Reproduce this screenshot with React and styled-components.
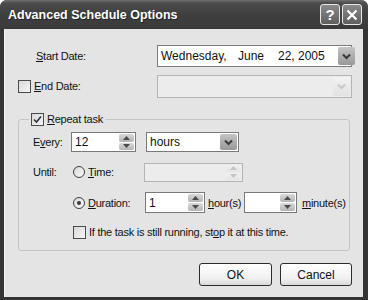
import React from 'react';
import styled, { createGlobalStyle } from 'styled-components';

const GlobalStyle = createGlobalStyle`
  html, body {
    margin: 0;
    padding: 0;
    background: #ffffff;
  }
  body {
    font-family: "Liberation Sans", Arial, sans-serif;
    font-size: 11px;
    letter-spacing: -0.25px;
    color: #111;
  }
`;

const Window = styled.div`
  width: 368px;
  height: 300px;
  display: flex;
  flex-direction: column;
  background: #343434;
  border-radius: 7px 7px 0 0;
  overflow: hidden;
`;

const TitleBar = styled.div`
  height: 29px;
  flex: none;
  display: flex;
  align-items: center;
  padding: 0 6px 0 8px;
  background: linear-gradient(to bottom, #707070 0, #4c4c4c 3px, #404040 45%, #3a3a3a 100%);
`;

const Title = styled.div`
  flex: 1;
  color: #fff;
  font-size: 12.5px;
  font-weight: bold;
  letter-spacing: 0;
  text-shadow: 1px 1px 0 #222;
  padding-top: 1px;
`;

const CaptionButton = styled.div`
  width: 20px;
  height: 21px;
  margin-left: 2px;
  box-sizing: border-box;
  border: 1px solid #e8e8e8;
  border-radius: 3px;
  background: linear-gradient(to bottom, #8a8a8a, #5e5e5e);
  display: flex;
  align-items: center;
  justify-content: center;
  color: #fff;
  font-size: 15px;
  font-weight: bold;
`;

const Body = styled.div`
  flex: 1;
  margin: 0 5px 3px 4px;
  background: #e4e4e4;
  display: flex;
  flex-direction: column;
  padding: 16px 12px 0 13px;
  border-left: 1px solid #f4f4f4;
`;

const FieldRow = styled.div`
  display: flex;
  align-items: center;
  height: 22px;
  margin-top: ${(p) => p.$top || 0}px;
`;

const LabelCell = styled.div`
  width: ${(p) => p.$w}px;
  flex: none;
  display: flex;
  align-items: center;
  gap: 3px;
  padding-left: ${(p) => p.$pad || 0}px;
  box-sizing: border-box;
  white-space: nowrap;
`;

const Key = styled.span`
  text-decoration: underline;
`;

const Check = styled.div`
  width: 13px;
  height: 13px;
  flex: none;
  box-sizing: border-box;
  border: 1px solid #4a4a4a;
  background: linear-gradient(135deg, #d8d8d8, #f6f6f6);
  display: flex;
  align-items: center;
  justify-content: center;
`;

const Radio = styled.div`
  width: 12px;
  height: 12px;
  flex: none;
  box-sizing: border-box;
  border: 1px solid #3f3f3f;
  border-radius: 50%;
  background: linear-gradient(135deg, #d8d8d8, #fafafa);
  display: flex;
  align-items: center;
  justify-content: center;
  &::after {
    content: '';
    width: 4px;
    height: 4px;
    border-radius: 50%;
    background: ${(p) => (p.$on ? '#3a3a3a' : 'transparent')};
  }
`;

const Box = styled.div`
  width: ${(p) => p.$w}px;
  height: ${(p) => p.$h || 20}px;
  flex: none;
  box-sizing: border-box;
  border: 1px solid ${(p) => (p.$disabled ? '#b4b4b4' : '#7a7a7a')};
  background: ${(p) => (p.$disabled ? '#ececec' : '#fff')};
  display: flex;
  align-items: stretch;
  padding: 1px;
`;

const BoxText = styled.div`
  flex: 1;
  display: flex;
  align-items: center;
  padding-left: 2px;
  font-size: 12px;
  letter-spacing: 0;
  white-space: pre;
`;

const DateField = styled.span`
  width: ${(p) => p.$w}px;
  flex: none;
`;

const DropButton = styled.div`
  width: 17px;
  flex: none;
  border-radius: 2px;
  background: ${(p) =>
    p.$disabled
      ? 'linear-gradient(to bottom, #f2f2f2, #e2e2e2)'
      : 'linear-gradient(to bottom, #c4c4c4, #989898)'};
  display: flex;
  align-items: center;
  justify-content: center;
`;

const SpinCol = styled.div`
  width: 15px;
  flex: none;
  display: flex;
  flex-direction: column;
  gap: 1px;
`;

const SpinHalf = styled.div`
  flex: 1;
  border-radius: 2px;
  background: ${(p) =>
    p.$disabled
      ? 'linear-gradient(to bottom, #f0f0f0, #e4e4e4)'
      : 'linear-gradient(to bottom, #d8d8d8, #b4b4b4)'};
  display: flex;
  align-items: center;
  justify-content: center;
`;

const Group = styled.div`
  position: relative;
  margin-top: 22px;
  margin-right: 1px;
  height: 132px;
  box-sizing: border-box;
  border: 1px solid #c4c4c4;
  border-radius: 3px;
  padding: 12px 0 0 14px;
  display: flex;
  flex-direction: column;
`;

const Legend = styled.div`
  position: absolute;
  top: -8px;
  left: 10px;
  padding: 0 3px 0 2px;
  background: #e4e4e4;
  display: flex;
  align-items: center;
  gap: 3px;
  height: 14px;
`;

const GroupRow = styled.div`
  display: flex;
  align-items: center;
  height: ${(p) => p.$h || 20}px;
  margin-top: ${(p) => p.$top || 0}px;
  white-space: nowrap;
`;

const Gap = styled.div`
  width: ${(p) => p.$w}px;
  flex: none;
`;

const Buttons = styled.div`
  display: flex;
  justify-content: flex-end;
  gap: 8px;
  margin-top: 12px;
  margin-right: -1px;
`;

const PushButton = styled.div`
  width: ${(p) => p.$w}px;
  height: 23px;
  box-sizing: border-box;
  border: 1px solid #2c2c2c;
  border-radius: 3px;
  background: linear-gradient(to bottom, #ffffff, #f0f0f0 70%, #d8d8d8);
  display: flex;
  align-items: center;
  justify-content: center;
  font-size: 12px;
  letter-spacing: 0;
`;

const Chevron = ({ color }) => (
  <svg width="9" height="7" viewBox="0 0 9 7">
    <path d="M1 1.5 L4.5 5 L8 1.5" fill="none" stroke={color} strokeWidth="2" />
  </svg>
);

const Arrow = ({ up, color }) => (
  <svg width="7" height="4" viewBox="0 0 7 4">
    <path d={up ? 'M0 4 L3.5 0 L7 4 Z' : 'M0 0 L3.5 4 L7 0 Z'} fill={color} />
  </svg>
);

const Combo = ({ w, h, disabled, children }) => (
  <Box $w={w} $h={h} $disabled={disabled}>
    <BoxText>{children}</BoxText>
    <DropButton $disabled={disabled}>
      <Chevron color={disabled ? '#c8c8c8' : '#3a3a3a'} />
    </DropButton>
  </Box>
);

const Spinner = ({ w, h, disabled, children }) => (
  <Box $w={w} $h={h} $disabled={disabled}>
    <BoxText>{children}</BoxText>
    <SpinCol>
      <SpinHalf $disabled={disabled}>
        <Arrow up color={disabled ? '#c4c4c4' : '#4a4a4a'} />
      </SpinHalf>
      <SpinHalf $disabled={disabled}>
        <Arrow color={disabled ? '#c4c4c4' : '#4a4a4a'} />
      </SpinHalf>
    </SpinCol>
  </Box>
);

const CheckMark = () => (
  <svg width="9" height="9" viewBox="0 0 9 9">
    <path d="M1 4.5 L3.5 7 L8 1.5" fill="none" stroke="#333" strokeWidth="1.6" />
  </svg>
);

const CloseGlyph = () => (
  <svg width="12" height="12" viewBox="0 0 12 12">
    <path d="M1.5 1.5 L10.5 10.5 M10.5 1.5 L1.5 10.5" stroke="#fff" strokeWidth="2.2" />
  </svg>
);

export default function App() {
  return (
    <>
      <GlobalStyle />
      <Window>
        <TitleBar>
          <Title>Advanced Schedule Options</Title>
          <CaptionButton>?</CaptionButton>
          <CaptionButton>
            <CloseGlyph />
          </CaptionButton>
        </TitleBar>
        <Body>
          <FieldRow>
            <LabelCell $w={139} $pad={18}>
              <span>
                <Key>S</Key>tart Date:
              </span>
            </LabelCell>
            <Box $w={195} $h={22}>
              <BoxText>
                <DateField $w={77}>Wednesday,</DateField>
                <DateField $w={40}>June</DateField>
                <DateField $w={60}>22, 2005</DateField>
              </BoxText>
              <DropButton>
                <Chevron color="#3a3a3a" />
              </DropButton>
            </Box>
          </FieldRow>
          <FieldRow $top={8}>
            <LabelCell $w={139}>
              <Check />
              <span>
                <Key>E</Key>nd Date:
              </span>
            </LabelCell>
            <Combo w={195} h={23} disabled />
          </FieldRow>

          <Group>
            <Legend>
              <Check>
                <CheckMark />
              </Check>
              <span>
                <Key>R</Key>epeat task
              </span>
            </Legend>
            <GroupRow>
              <LabelCell $w={38}>
                <span>
                  E<Key>v</Key>ery:
                </span>
              </LabelCell>
              <Spinner w={65}>12</Spinner>
              <Gap $w={10} />
              <Combo w={93}>hours</Combo>
            </GroupRow>
            <GroupRow $top={10}>
              <LabelCell $w={40}>
                <span>Until:</span>
              </LabelCell>
              <Radio />
              <Gap $w={3} />
              <LabelCell $w={56}>
                <span>
                  <Key>T</Key>ime:
                </span>
              </LabelCell>
              <Spinner w={99} h={19} disabled />
            </GroupRow>
            <GroupRow $top={10} $h={21}>
              <Gap $w={40} />
              <Radio $on />
              <Gap $w={3} />
              <LabelCell $w={57}>
                <span>
                  <Key>D</Key>uration:
                </span>
              </LabelCell>
              <Spinner w={60} h={21}>1</Spinner>
              <Gap $w={3} />
              <LabelCell $w={36}>
                <span>
                  <Key>h</Key>our(s)
                </span>
              </LabelCell>
              <Spinner w={53} h={21} />
              <Gap $w={5} />
              <span>
                <Key>m</Key>inute(s)
              </span>
            </GroupRow>
            <GroupRow $top={12} $h={14}>
              <Gap $w={40} />
              <Check />
              <Gap $w={3} />
              <span>
                If the task is still running, st<Key>o</Key>p it at this time.
              </span>
            </GroupRow>
          </Group>

          <Buttons>
            <PushButton $w={73}>OK</PushButton>
            <PushButton $w={72}>Cancel</PushButton>
          </Buttons>
        </Body>
      </Window>
    </>
  );
}
